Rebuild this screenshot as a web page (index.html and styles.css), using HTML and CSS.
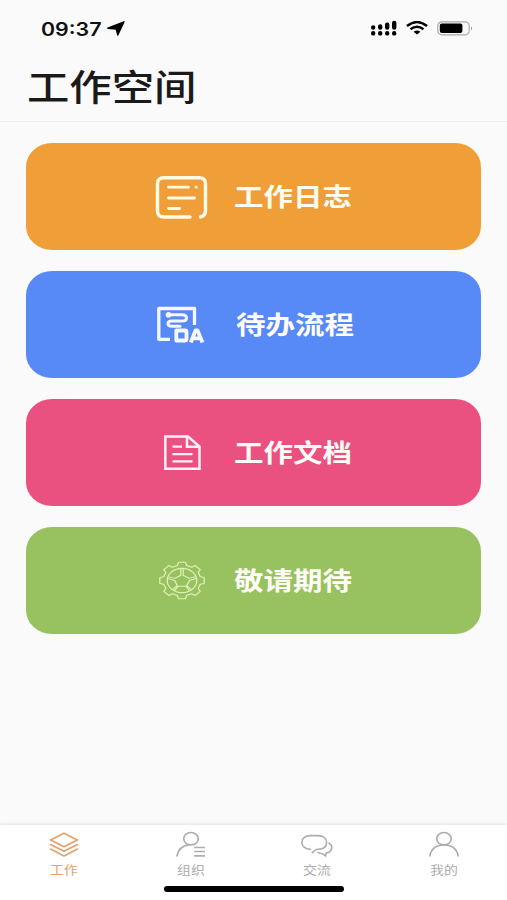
FILE: index.html
```html
<!DOCTYPE html>
<html lang="zh-CN">
<head>
<meta charset="utf-8">
<title>工作空间</title>
<link rel="stylesheet" href="styles.css">
</head>
<body>
<div class="app">
  <header class="header">
    <div class="status">
      <span class="time">09:37</span>
      <svg class="locate" viewBox="0 0 18 15"><path d="M17 .8 10.800 14 9.200 8 .8 7.200Z" fill="#000" stroke="#000" stroke-width="1.400" stroke-linejoin="round"/></svg>
      <svg class="signal" viewBox="0 0 28 16"><g stroke="#000" stroke-width="4.400" stroke-linecap="round"><path d="M3.200 7.400v.2M10.200 6.500v1.100M17.200 4.600v3M24.200 3v4.600M3.200 13.300v.1M10.200 13.300v.1M17.200 13.300v.1M24.200 13.300v.1"/></g></svg>
      <svg class="wifi" viewBox="0 0 22 14"><g fill="none" stroke="#000" stroke-width="2.400"><path d="M.9 5Q11-3 21.100 5M4.500 8.300Q11 3 17.500 8.300"/></g><path d="M7.600 10.800Q11 8 14.400 10.800L11 13.600Z"/></svg>
      <svg class="battery" viewBox="0 0 37 15"><rect x=".8" y=".8" width="31.400" height="13" rx="4" fill="none" stroke="#aaa" stroke-width="1.200"/><rect x="2.800" y="2.600" width="22.600" height="9.400" rx="2"/><path d="M34 5.200q2.200 2 0 4.400Z" fill="#999"/></svg>
    </div>
    <h1 class="title">工作空间</h1>
  </header>
  <main class="cards">
    <a class="card orange">
      <svg class="card-icon" viewBox="0 0 56 46"><g fill="none" stroke="#fffbe9" stroke-width="3.400" stroke-linecap="round" stroke-linejoin="round"><path d="M36 43H10Q3.500 43 3.500 37V9.500Q3.500 3.700 10 3.700H45Q51.500 3.700 51.500 9.500V37Q51.500 41.500 46.500 43"/><path stroke-width="2.800" d="M14.500 13.200H34.500M42 13.200h.2M14.500 24H40.500M14.500 34.500H25.500"/></g></svg>
      <span class="label">工作日志</span>
    </a>
    <a class="card blue">
      <svg class="card-icon" viewBox="0 0 56 46"><g fill="none" stroke="#f5f8ff" stroke-width="3.300" stroke-linejoin="round"><path d="M16 37.300H4.800V6.500H40.500V23"/><path stroke-width="3" stroke-linecap="round" d="M14 12.800H28Q32.500 12.800 32.500 16Q32.500 19 28 19H18Q14 19 14 21.500Q14 24.300 18 24.300H26"/><circle cx="14.500" cy="12.800" r="1.200" fill="#f5f8ff"/><path stroke-width="3.800" d="M22.300 28.500H31Q32.500 28.500 32.500 30V37Q32.500 38.500 31 38.500H22.300Z"/><path stroke-width="3.800" d="M36.800 40.500 41.500 28.500H43.500L48.500 40.500M39 36.300H47"/></g></svg>
      <span class="label shifted">待办流程</span>
    </a>
    <a class="card pink">
      <svg class="card-icon" viewBox="0 0 56 46"><g fill="none" stroke="#fff2f7" stroke-width="2.500"><path d="M11.300 6.500H34L45.500 16.500V38.800H11.300Z"/><path d="M33 6.500V16.800H45.500"/><path d="M18.500 16.600H28M18.500 24.200H38.500M18.500 31.300H38.500" stroke-width="2.200"/></g></svg>
      <span class="label">工作文档</span>
    </a>
    <a class="card green">
      <svg class="card-icon" viewBox="0 0 56 46"><g transform="translate(28 22.500) scale(1.180 .97)" fill="none" stroke="#e0f2b8" stroke-width="1.050" stroke-linejoin="round"><path d="M-3.900-15.500-3-18.800H3L3.900-15.500 8.200-13.700 11.200-15.400 15.400-11.200 13.700-8.200 15.500-3.900 18.800-3V3L15.500 3.900 13.700 8.200 15.400 11.200 11.200 15.400 8.200 13.700 3.900 15.500 3 18.800H-3L-3.900 15.500-8.200 13.700-11.200 15.400-15.400 11.200-13.700 8.200-15.500 3.900-18.800 3V-3L-15.500-3.900-13.700-8.200-15.400-11.200-11.200-15.400-8.200-13.700Z"/><circle r="12.500"/><path d="M-1-12V-5.400L-6-2.200-11.800-4M1-12V-5.400L6-2.200 11.800-4M-11.800-2-6.300 0-4 5.200-8 9.700M11.800-2 6.300 0 4 5.200 8 9.700M-6.500 10.700-3.200 6H3.200L6.500 10.700"/></g></svg>
      <span class="label">敬请期待</span>
    </a>
  </main>
  <nav class="tabs">
    <a class="tab active">
      <svg class="tab-icon" viewBox="0 0 34 28"><g fill="none" stroke="currentColor" stroke-width="1.800" stroke-linejoin="round"><path d="M17 2.300 30.500 9 17 15.700 3.500 9ZM3 13.200 17 20.300 31 13.200M3 17.800 17 25 31 17.800"/></g></svg>
      <span class="tab-label">工作</span>
    </a>
    <a class="tab">
      <svg class="tab-icon" viewBox="0 0 34 28"><g fill="none" stroke="currentColor" stroke-width="1.700"><ellipse cx="17" cy="7.700" rx="7.300" ry="6.200"/><path d="M2.800 25.500Q4.500 15 15 13.800M20.200 16.500H31M20.200 20.500H31M20.200 24.800H31"/></g></svg>
      <span class="tab-label">组织</span>
    </a>
    <a class="tab">
      <svg class="tab-icon" viewBox="0 0 34 28"><g fill="none" stroke="currentColor" stroke-width="1.600" stroke-linecap="round" stroke-linejoin="round"><path d="M10.500 18.200C5 18 1.800 15 1.800 11.500 1.800 7 5.500 4.600 10.500 4.600H18C23 4.600 26.600 7 26.600 11.500 26.600 15.500 23.500 18 18.500 18.200 16 18.300 14 19.500 12.300 21.700"/><path d="M29 12.200C33.500 15 32.500 20.800 26 22.300L25.500 25C23 22 20.500 22 18 21.700"/></g></svg>
      <span class="tab-label">交流</span>
    </a>
    <a class="tab">
      <svg class="tab-icon" viewBox="0 0 34 28"><g fill="none" stroke="currentColor" stroke-width="1.700"><ellipse cx="17" cy="7.700" rx="7.300" ry="6.200"/><path d="M2.800 25.500C4 17.800 9.500 14 17 14S30 17.800 31.200 25.500"/></g></svg>
      <span class="tab-label">我的</span>
    </a>
    <div class="home-bar"></div>
  </nav>
</div>
</body>
</html>
```
FILE: styles.css
```css
* { box-sizing: border-box; }
body { margin: 0; font-family: "Noto Sans CJK SC", sans-serif; }
svg { display: block; flex: none; }
.app { display: flex; flex-direction: column; width: 507px; height: 900px; background: #fafafa; }
.header { height: 122px; border-bottom: 1px solid #eee; }
.status { display: flex; align-items: center; height: 56px; padding: 0 33px 0 41px; }
.time { width: 61px; padding-top: 2px; font: 600 18.500px/24px Inter, sans-serif; color: #111; white-space: nowrap; transform: scaleX(1.155); transform-origin: left; }
.locate { width: 18px; height: 15px; margin-left: 5px; }
.signal { width: 28px; height: 16px; margin-left: auto; }
.wifi { width: 22px; height: 14px; margin-left: 8px; }
.battery { width: 37px; height: 15px; margin-left: 9px; }
.title { width: max-content; margin: 3px 0 0 27px; font-size: 36px; line-height: 52px; font-weight: 500; color: #1a1a1a; transform: scaleX(1.177); transform-origin: left; }
.cards { flex: 1; display: flex; flex-direction: column; gap: 21.500px; padding: 21.300px 26px 0; }
.card { display: flex; align-items: center; height: 106.500px; padding-left: 128px; border-radius: 26px / 24px; }
.orange { background: #f09f38; }
.blue { background: #5789f7; }
.pink { background: #ea5180; }
.green { background: #98c160; }
.card-icon { width: 56px; height: 46px; }
.label { margin: 0 0 3px 24px; font-size: 25px; line-height: 36px; font-weight: 700; color: #fffdf6; white-space: nowrap; transform: scaleX(1.18); transform-origin: left; }
.shifted { margin-left: 26px; }
.tabs { position: relative; display: grid; grid-template-columns: repeat(4, 1fr); height: 75px; padding: 6px 0 0 1px; background: #fff; box-shadow: 0 -1px 3px rgba(0, 0, 0, .1); }
.tab { display: flex; flex-direction: column; align-items: center; color: #adadad; }
.active { color: #e2a26d; }
.tab-icon { width: 34px; height: 28px; }
.tab-label { margin-top: 2px; font-size: 12px; line-height: 18px; transform: scaleX(1.16); }
.home-bar { position: absolute; left: 164px; bottom: 8px; width: 180px; height: 6px; border-radius: 3px; background: #000; }
```
